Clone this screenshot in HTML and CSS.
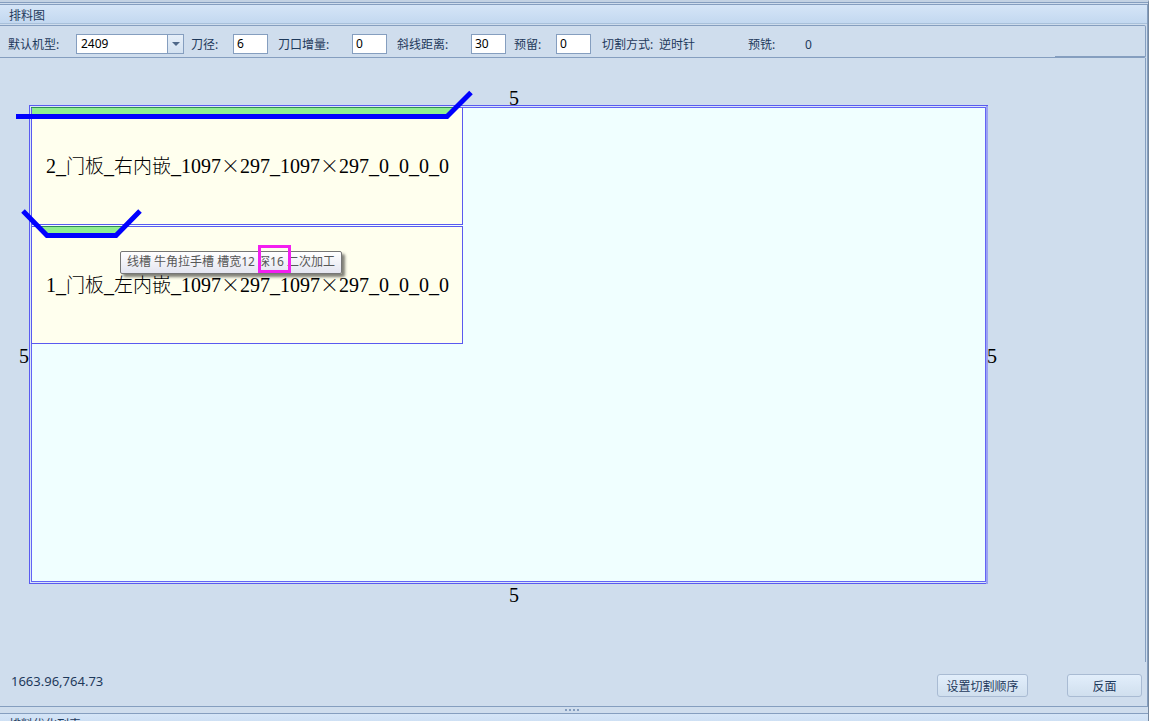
FILE: index.html
```html
<!DOCTYPE html>
<html lang="zh-CN">
<head>
    <meta charset="UTF-8">
    <meta name="viewport" content="width=device-width, initial-scale=1.0">
    <title>排料图</title>
    <link rel="stylesheet" href="styles.css">
</head>
<body>
    <div class="window">
        <!-- Layout panel -->
        <section class="panel">
            <h1 class="panel-title">排料图</h1>

            <form class="toolbar">
                <div class="field">
                    <label class="label-model" for="model">默认机型:</label>
                    <span class="combo">
                        <select id="model">
                            <option>2409</option>
                        </select>
                        <span class="combo-arrow"></span>
                    </span>
                </div>
                <div class="field">
                    <label class="label-short" for="diameter">刀径:</label>
                    <input type="text" id="diameter" value="6">
                </div>
                <div class="field">
                    <label class="label-long" for="increment">刀口增量:</label>
                    <input type="text" id="increment" value="0">
                </div>
                <div class="field">
                    <label class="label-long" for="slope">斜线距离:</label>
                    <input type="text" id="slope" value="30">
                </div>
                <div class="field">
                    <label class="label-short" for="reserve">预留:</label>
                    <input type="text" id="reserve" value="0">
                </div>
                <div class="field">
                    <span class="label-text">切割方式:</span>
                    <span>逆时针</span>
                </div>
                <div class="field">
                    <span class="label-text">预铣:</span>
                    <span>0</span>
                </div>
                <span class="toolbar-edge"></span>
            </form>

            <div class="canvas">
                <svg class="board" width="1010" height="560" viewBox="0 0 1010 560">
                    <!-- Sheet -->
                    <rect class="sheet-outer" x="29.5" y="47.5" width="958" height="478"/>
                    <rect class="sheet" x="31.5" y="49.5" width="954" height="474"/>
                    <path class="sheet-side" d="M987 48V526"/>

                    <!-- Parts -->
                    <rect class="part" x="31.5" y="49.5" width="431" height="117"/>
                    <rect class="part" x="31.5" y="168.5" width="431" height="117"/>

                    <!-- Grooves -->
                    <path class="groove" d="M32 50H456L447 58H32Z"/>
                    <path class="groove-edge" d="M31 49.5H456"/>
                    <path class="groove" d="M39 169H123L115 177H47Z"/>
                    <path class="groove-edge" d="M39 168.5H123"/>
                    <path class="cut" d="M16 58.5H447L471 34.5"/>
                    <path class="cut" d="M23 153L47 177.5H116L140 153"/>

                    <!-- Part names -->
                    <text class="name" x="46" y="115">2_<tspan class="wide">门板</tspan>_<tspan class="wide">右内嵌</tspan>_1097<tspan class="wide">×</tspan>297_1097<tspan class="wide">×</tspan>297_0_0_0_0</text>
                    <text class="name" x="46" y="234">1_<tspan class="wide">门板</tspan>_<tspan class="wide">左内嵌</tspan>_1097<tspan class="wide">×</tspan>297_1097<tspan class="wide">×</tspan>297_0_0_0_0</text>

                    <!-- Margins -->
                    <text class="name" x="509" y="47">5</text>
                    <text class="name" x="509" y="544">5</text>
                    <text class="name" x="19" y="305">5</text>
                    <text class="name" x="987" y="305">5</text>
                </svg>
                <div class="tooltip">线槽 牛角拉手槽 槽宽12 深16 二次加工</div>
                <div class="highlight"></div>
            </div>

            <footer class="footer">
                <span class="position">1663.96,764.73</span>
                <button type="button" class="btn-order">设置切割顺序</button>
                <button type="button" class="btn-back">反面</button>
            </footer>
        </section>

        <div class="splitter"><i></i><i></i><i></i><i></i></div>

        <!-- Result list panel -->
        <section class="list-panel">
            <h2 class="panel-title">排料优化列表</h2>
        </section>
    </div>
</body>
</html>
```

FILE: styles.css
```css
* {
    box-sizing: border-box;
}

body {
    margin: 0;
    height: 100vh;
    overflow: hidden;
    background: #cfdded;
    color: #1e395b;
    font-family: "Noto Sans", "Noto Sans CJK SC", sans-serif;
    font-size: 12px;
    line-height: 18px;
}

.window {
    display: flex;
    flex-direction: column;
    height: 100%;
    border-top: 2px solid #c3d2e3;
    border-right: 1px solid #75889f;
}

/* Panels */
.panel {
    display: flex;
    flex-direction: column;
    flex: 1;
    min-height: 0;
    margin-top: 2px;
    border: 1px solid #859ebf;
    border-left: none;
    box-shadow: 0 -1px 0 #cfdded, 0 -2px 0 #859ebf;
}

.panel-title {
    flex: none;
    margin: 0;
    padding-left: 9px;
    height: 19px;
    border-bottom: 1px solid #a8c0da;
    background: linear-gradient(#d5e5f7, #c3d8f0);
    font-size: 12px;
    font-weight: normal;
    line-height: 22px;
}

.list-panel {
    flex: none;
    height: 8px;
    overflow: hidden;
    border-top: 1px solid #859ebf;
}

/* Toolbar */
.toolbar {
    position: relative;
    display: grid;
    grid-template-columns: 183px 87px 119px 117px 88px 146px auto;
    align-items: center;
    flex: none;
    height: 33px;
    margin: 1px 1px 0 0;
    padding: 4px 0 0 8px;
    border: 1px solid #859ebf;
    border-left: none;
    border-radius: 0 2px 2px 0;
}

.toolbar-edge {
    position: absolute;
    right: 0;
    bottom: 0;
    width: 90px;
    height: 1px;
    background: #859ebf;
}

.field {
    display: flex;
    align-items: center;
    line-height: 20px;
    white-space: nowrap;
}

.field > label,
.field > span:not(.combo) {
    padding-top: 2px;
}

.label-model {
    width: 68px;
}

.label-short {
    width: 42px;
}

.label-long {
    width: 74px;
}

.label-text {
    width: 57px;
}

input,
select {
    height: 20px;
    margin: 0;
    padding: 0 4px;
    border: 1px solid #859ebf;
    border-radius: 0;
    outline: none;
    background: #fff;
    color: #000;
    font-family: inherit;
    font-size: 12px;
    line-height: 18px;
}

input {
    width: 35px;
    padding: 0 3px;
}

.combo {
    position: relative;
    display: flex;
}

select {
    width: 108px;
    appearance: none;
}

.combo-arrow {
    position: absolute;
    top: 1px;
    right: 1px;
    width: 16px;
    height: 18px;
    border-left: 1px solid #859ebf;
    background: linear-gradient(#e6eff9, #d3e1f0);
    pointer-events: none;
}

.combo-arrow::after {
    content: "";
    position: absolute;
    top: 7px;
    left: 4px;
    border: 4px solid transparent;
    border-top-color: #4f6889;
    border-bottom: none;
}

/* Canvas */
.canvas {
    position: relative;
    flex: 1;
    min-height: 0;
    margin-right: 1px;
    overflow: hidden;
    border-right: 1px solid #859ebf;
}

.board {
    display: block;
}

.sheet-outer {
    fill: #d9e6f8;
    stroke: #5a5af0;
}

.sheet {
    fill: #f0ffff;
    stroke: #6464f5;
}

.sheet-side {
    stroke: #9ba2f2;
    stroke-width: 2;
}

.part {
    fill: #ffffee;
    stroke: #5a5af0;
}

.groove {
    fill: #90ee90;
}

.groove-edge {
    stroke: #2e8b57;
}

.cut {
    fill: none;
    stroke: #0000ff;
    stroke-width: 5;
}

.name {
    fill: #000;
    font-family: "Liberation Serif", "Noto Sans CJK SC", serif;
    font-size: 20px;
}

.wide {
    font-family: "Noto Sans CJK SC", sans-serif;
    font-size: 19px;
    font-weight: 300;
}

.tooltip {
    position: absolute;
    top: 193px;
    left: 120px;
    height: 23px;
    padding: 0 6px;
    border: 1px solid #767676;
    border-radius: 2px;
    background: linear-gradient(#fff, #e4e5f0);
    box-shadow: 3px 3px 3px rgba(0, 0, 0, 0.5);
    color: #575757;
    line-height: 20px;
    white-space: nowrap;
}

.highlight {
    position: absolute;
    top: 187px;
    left: 258px;
    width: 33px;
    height: 28px;
    border: 3px solid #f31ff0;
}

/* Footer */
.footer {
    display: flex;
    align-items: flex-start;
    flex: none;
    height: 44px;
    padding: 12px 5px 0 11px;
}

.position {
    flex: 1;
    font-size: 13px;
    line-height: 14px;
}

button {
    height: 23px;
    padding: 2px 0 0;
    border: 1px solid #a9bbd3;
    border-radius: 3px;
    background: linear-gradient(#e2eefb, #d0dfee);
    color: #1e395b;
    font-family: inherit;
    font-size: 12px;
    line-height: 20px;
}

.btn-order {
    width: 91px;
    margin-right: 39px;
}

.btn-back {
    width: 75px;
}

.splitter {
    display: flex;
    justify-content: center;
    align-items: center;
    flex: none;
    gap: 2px;
    height: 6px;
    padding-right: 4px;
}

.splitter i {
    width: 2px;
    height: 2px;
    background: #859ebf;
}
```
